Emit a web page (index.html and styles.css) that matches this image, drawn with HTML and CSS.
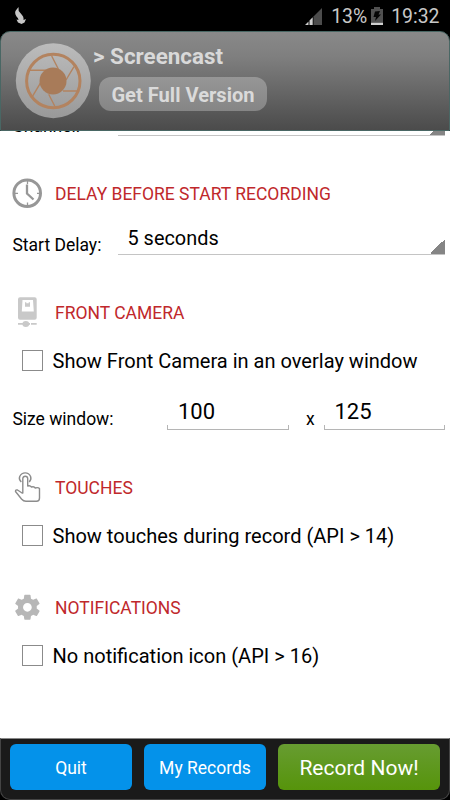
FILE: index.html
```html
<!DOCTYPE html>
<html lang="en">
<head>
<meta charset="utf-8">
<title>Screencast</title>
<link rel="stylesheet" href="styles.css">
</head>
<body>
<div class="screen">
  <div class="status">
    <svg class="flame" width="12" height="18" viewBox="0 0 12 18"><path d="M3.500 0L3.700 4L7 8Q9 10 8.500 13L11 12L9.500 15.500L6.500 17L3 15.500L1.500 12.500L3.500 13Q3.500 11 1.500 9.500Q-.8 6 .8 3.500Z" fill="#c6c6c6"/></svg>
    <svg class="signal" width="17" height="17" viewBox="0 0 17 17"><path d="M8.500 8.500L17 0V17H8.500Z" fill="#4c4c4c"/><path d="M0 17L3.500 13.500V17ZM4.500 12.500L7.700 9.300V17H4.500Z" fill="#d0d0d0"/></svg>
    <span class="percent">13%</span>
    <svg class="battery" width="12" height="18" viewBox="0 0 12 18"><path d="M0 2H3V0H9V2H12V15H0Z" fill="#505050"/><path d="M0 15.500H12V18H0Z" fill="#d0d0d0"/><path d="M4 4.500L9 4L7.500 7.500H10L4 14L5 10H2.500Z" fill="#050505"/></svg>
    <span class="time">19:32</span>
  </div>
  <header class="header">
    <svg class="logo" width="76" height="76" viewBox="0 0 76 76">
      <defs><linearGradient id="disc" x1="0" y1="0" x2="0" y2="1"><stop offset="0" stop-color="#bcbcbc"/><stop offset="1" stop-color="#999"/></linearGradient></defs>
      <circle cx="38.300" cy="37.700" r="37.500" fill="url(#disc)"/>
      <g stroke="#b3835f" fill="none">
        <circle cx="38.300" cy="38" r="26.700" stroke-width="3"/>
        <path stroke-width="1.400" d="M36.700 13L43.300 26M59 23.700L51 37M64 48H48M39.700 63L33.700 51.300M17.300 53.700L25.700 39.700M15 27.300H31.700"/>
      </g>
      <circle cx="38" cy="38" r="13.500" fill="#a87b59"/>
    </svg>
    <div class="titles">
      <h1 class="title">&gt; Screencast</h1>
      <button class="full">Get Full Version</button>
    </div>
  </header>
  <main class="settings">
    <div class="spinner-row clipped"><span class="label">Channel:</span><div class="spinner"></div></div>
    <h2 class="heading">
      <svg class="icon" width="30" height="30" viewBox="0 0 30 30" fill="none" stroke="#979797"><circle cx="15.200" cy="15.200" r="13.300" stroke-width="3"/><path d="M15.500 3V6M15.500 24.500V27.500M3 15.300H6M25 15.300H28" stroke-width="1.300"/><path d="M15 6.500V15.500L21.500 21.500" stroke-width="2.300"/></svg>
      <span>DELAY BEFORE START RECORDING</span>
    </h2>
    <div class="spinner-row"><span class="label">Start Delay:</span><div class="spinner">5 seconds</div></div>
    <h2 class="heading">
      <svg class="icon" width="30" height="30" viewBox="0 0 30 30" fill="#c9c9c9"><path fill-rule="evenodd" d="M8 .2H22.700Q24.700 .2 24.700 2.200V20.800Q24.700 22.800 22.700 22.800H8Q6 22.800 6 20.800V2.200Q6 .2 8 .2ZM10.500 3L9.800 14.500H21.800L21 3Z"/><path d="M13 5.200H14.300V6.200H16.700V5.200H18V9.700H13ZM6 26H11V27.800H6ZM19 26H24.700V27.800H19Z"/><ellipse cx="13.800" cy="26.900" rx="3.400" ry="3"/><path d="M13 26H18V27.800H13Z"/></svg>
      <span>FRONT CAMERA</span>
    </h2>
    <label class="check"><input type="checkbox"><span>Show Front Camera in an overlay window</span></label>
    <div class="size-row"><span class="label">Size window:</span><div class="field">100</div><span class="times">x</span><div class="field last">125</div></div>
    <h2 class="heading">
      <svg class="icon" width="30" height="30" viewBox="0 0 30 30" fill="none" stroke="#8c8c8c" stroke-width="1.400" stroke-linejoin="round"><path d="M10.800 21.500V6.500Q11 4.200 13.300 4.200T15.700 6.500V14Q18 13 19.500 15Q22 14 23.300 16Q26 15 27.500 16.500V26Q27.500 29.300 24.500 29.300H14Q11.500 29.300 9.500 27L3.500 19.500Q3.500 17.500 5.500 18L10.800 21.500"/><path d="M9.300 10Q6.500 7.500 7.700 4.500Q9.500 .9 13.200 .9T18.600 4.500Q19.700 7.500 17.200 10"/></svg>
      <span>TOUCHES</span>
    </h2>
    <label class="check"><input type="checkbox"><span>Show touches during record (API &gt; 14)</span></label>
    <h2 class="heading">
      <svg class="icon" width="30" height="30" viewBox="0 0 30 30"><path transform="translate(.4 .3) scale(1.250)" fill="#b7b7b7" d="M19.430 12.980c.04-.32.070-.64.070-.98s-.03-.66-.07-.98l2.110-1.650c.19-.15.240-.42.120-.64l-2-3.460c-.12-.22-.39-.3-.61-.22l-2.490 1c-.52-.4-1.080-.73-1.690-.98l-.38-2.650C14.460 2.180 14.250 2 14 2h-4c-.25 0-.46.180-.49.420l-.38 2.650c-.61.250-1.170.590-1.690.980l-2.490-1c-.23-.09-.49 0-.61.220l-2 3.460c-.13.220-.07.490.120.640l2.110 1.650c-.04.320-.07.650-.07.980s.03.660.070.980l-2.110 1.650c-.19.150-.24.420-.12.640l2 3.460c.12.220.390.300.610.220l2.490-1c.52.400 1.080.730 1.690.980l.38 2.650c.03.240.240.420.490.420h4c.25 0 .46-.18.490-.42l.38-2.650c.61-.25 1.170-.59 1.690-.98l2.490 1c.23.090.490 0 .61-.22l2-3.460c.12-.22.070-.49-.12-.64l-2.110-1.650zM12 15.500c-1.930 0-3.500-1.570-3.500-3.500s1.570-3.500 3.500-3.500 3.500 1.570 3.500 3.500-1.570 3.500-3.500 3.500z"/></svg>
      <span>NOTIFICATIONS</span>
    </h2>
    <label class="check"><input type="checkbox"><span>No notification icon (API &gt; 16)</span></label>
  </main>
  <div class="dock">
    <footer class="footer">
      <button class="btn">Quit</button>
      <button class="btn">My Records</button>
      <button class="btn record">Record Now!</button>
    </footer>
  </div>
</div>
</body>
</html>
```
FILE: styles.css
```css
* { box-sizing: border-box; }
body { margin: 0; font-family: Roboto, sans-serif; background: #000; }
.screen { width: 450px; height: 800px; display: flex; flex-direction: column; overflow: hidden; background: #000; }
button { font: inherit; border: 0; padding: 0; }

.status { height: 31px; flex: none; display: flex; align-items: flex-start; padding: 7px 10.500px 0 15px; color: #c8c8c8; font-size: 19.400px; line-height: 20px; }
.signal { margin: 1px 9px 0 auto; }
.battery { margin: 0 8px 0 4px; }

.header { height: 100px; flex: none; display: flex; padding: 11px 0 0 14px; border: 1px solid #496764; border-radius: 10px 10px 0 0; background: linear-gradient(#898989, #7f7f7f 25%, #4b4b4b); color: #d9d9d9; }
.logo { flex: none; }
.titles { padding-left: 2px; }
.title { margin: 0; font-size: 22.400px; font-weight: 700; line-height: 26px; }
.full { display: block; width: 168px; height: 34px; margin: 8px 0 0 6px; padding-top: 1px; border-radius: 12px; background: linear-gradient(#969696, #858585); color: #dadada; font-size: 20.100px; font-weight: 700; }

.settings { flex: 1; min-height: 0; overflow: hidden; background: #fff; color: #000; }
.spinner-row { display: flex; height: 33px; margin: 14px 5px 0 12px; }
.spinner-row.clipped { margin-top: -28px; }
.label { padding-left: .4px; font-size: 17.500px; line-height: 20px; }
.spinner-row .label { width: 106px; padding-top: 13px; }
.spinner { flex: 1; padding: 5px 0 0 9.500px; font-size: 19.900px; line-height: 24px; border-bottom: 1px solid #c4c4c4; background: linear-gradient(135deg, transparent 50%, #858585 50%) right bottom / 15px 15px no-repeat; }
.heading { display: flex; align-items: center; height: 30px; margin: 42px 0 0 12px; font-size: 17.500px; font-weight: 400; color: #c0282b; }
.heading span { padding-top: 2px; }
.icon { flex: none; margin-right: 13px; }
.check { display: flex; align-items: center; height: 30px; margin: 18px 0 0 22px; font-size: 20.050px; }
.check input { appearance: none; flex: none; width: 21px; height: 21px; margin: 0 9.500px 0 0; border: 1px solid #8b8b8b; }
.check span { padding-top: 1px; }
.size-row { display: flex; height: 32px; margin: 23px 5px 0 12px; }
.size-row .label { width: 155px; padding-top: 11px; }
.field { width: 122px; padding-left: 11px; font-size: 22px; line-height: 27px; background: linear-gradient(#b5b5b5, #b5b5b5) left bottom / 1px 4px no-repeat, linear-gradient(#b5b5b5, #b5b5b5) right bottom / 1px 4px no-repeat; border-bottom: 1px solid #b5b5b5; }
.field.last { width: 121px; padding-left: 10.500px; }
.times { width: 35px; padding: 11px 0 0 17px; font-size: 17.500px; line-height: 20px; }

.dock { height: 62px; flex: none; background: linear-gradient(#fff 12px, #000 12px); }
.footer { height: 62px; display: flex; gap: 12px; padding: 5px 9px 9px; border: 1px solid #444; border-top-color: #888; border-radius: 0 0 10px 10px; background: #1a1a1a; }
.btn { flex: none; width: 122px; height: 46px; padding-top: 2px; border-radius: 6px; background: #0492ea; color: #fff; font-size: 17.500px; }
.record { width: 162px; background: linear-gradient(#679c31, #56940b); font-size: 21px; }
```
